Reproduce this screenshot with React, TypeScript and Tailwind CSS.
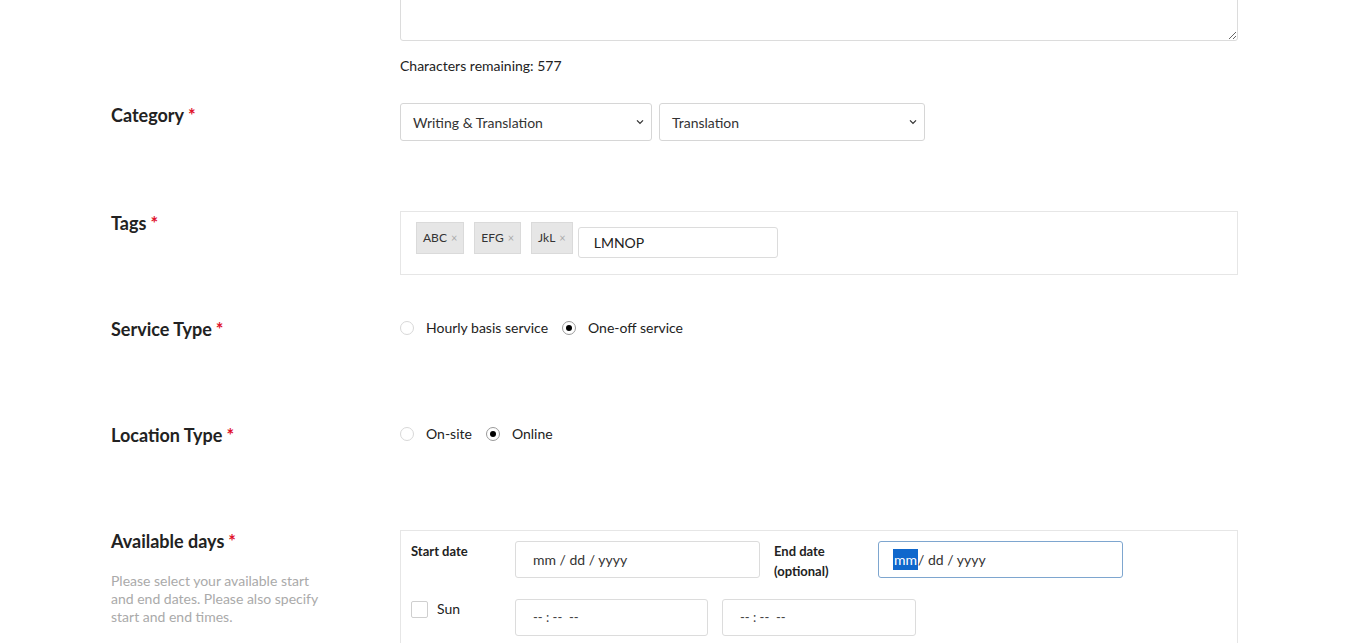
import React from 'react'

const font = { fontFamily: 'Lato, "Noto Sans", Arial, sans-serif' }

function Label({ text }: { text: string }) {
    return (
        <div className="text-[18px] font-bold leading-[24px] text-[#222]">
            {text}
            <span className="ml-1 text-[#e0112b]">*</span>
        </div>
    )
}

function Chevron() {
    return (
        <svg width="8" height="6" viewBox="0 0 8 6" className="shrink-0">
            <path d="M1 1.4 L4 4.4 L7 1.4" fill="none" stroke="#333" strokeWidth="1.3" />
        </svg>
    )
}

function Select({ value, width }: { value: string; width: string }) {
    return (
        <div className={`${width} flex h-[38px] items-center justify-between rounded-[3px] border border-[#d6d6d6] bg-white pl-3 pr-[7px] text-[14px] text-[#333]`}>
            <span>{value}</span>
            <Chevron />
        </div>
    )
}

function Chip({ text }: { text: string }) {
    return (
        <div className="flex h-[32px] items-center gap-[4px] border border-[#dadada] bg-[#e6e6e6] px-[6px] text-[12px] text-[#333]">
            <span>{text}</span>
            <span className="text-[11px] text-[#aaa]">×</span>
        </div>
    )
}

function Radio({ label, checked }: { label: string; checked?: boolean }) {
    return (
        <div className="mr-[14px] flex items-center gap-3">
            <span
                className={`flex h-[14px] w-[14px] items-center justify-center rounded-full border ${checked ? 'border-[#9a9a9a]' : 'border-[#d8d8d8]'} bg-white`}
            >
                {checked && <span className="h-[6px] w-[6px] rounded-full bg-black" />}
            </span>
            <span className="text-[14px] text-[#222]">{label}</span>
        </div>
    )
}

export default function App() {
    return (
        <div style={font} className="min-h-[643px] overflow-hidden bg-white pl-[111px]">
            {/* Description (scrolled out of view) */}
            <div className="flex">
                <div className="w-[289px] shrink-0" />
                <div className="w-[838px]">
                    <textarea
                        readOnly
                        className="-mt-[60px] block h-[101px] w-full rounded-[3px] border border-[#dcdcdc] bg-white outline-none"
                    />
                    <p className="mt-[15px] text-[14px] leading-[20px] text-[#222]">Characters remaining: 577</p>
                </div>
            </div>

            {/* Category */}
            <div className="mt-[27px] flex min-h-[108px]">
                <div className="w-[289px] shrink-0">
                    <Label text="Category" />
                </div>
                <div className="flex w-[838px] items-start gap-[7px]">
                    <Select value="Writing & Translation" width="w-[252px]" />
                    <Select value="Translation" width="w-[266px]" />
                </div>
            </div>

            {/* Tags */}
            <div className="flex min-h-[106px]">
                <div className="w-[289px] shrink-0">
                    <Label text="Tags" />
                </div>
                <div className="h-[64px] w-[838px] border border-[#e6e6e6] px-[15px] pt-[10px]">
                    <div className="flex items-start">
                        <div className="flex gap-[10px]">
                            <Chip text="ABC" />
                            <Chip text="EFG" />
                            <Chip text="JkL" />
                        </div>
                        <div className="ml-[5px] mt-[5px] flex h-[31px] w-[200px] items-center rounded-[3px] border border-[#dcdcdc] pl-[15px] text-[14px] text-[#222]">
                            LMNOP
                        </div>
                    </div>
                </div>
            </div>

            {/* Service Type */}
            <div className="flex min-h-[106px]">
                <div className="w-[289px] shrink-0">
                    <Label text="Service Type" />
                </div>
                <div className="flex h-[21px] w-[838px] items-center">
                    <Radio label="Hourly basis service" />
                    <Radio label="One-off service" checked />
                </div>
            </div>

            {/* Location Type */}
            <div className="flex min-h-[106px]">
                <div className="w-[289px] shrink-0">
                    <Label text="Location Type" />
                </div>
                <div className="flex h-[21px] w-[838px] items-center">
                    <Radio label="On-site" />
                    <Radio label="Online" checked />
                </div>
            </div>

            {/* Available days */}
            <div className="flex">
                <div className="w-[289px] shrink-0">
                    <Label text="Available days" />
                    <p className="mt-[19px] w-[210px] text-[14px] leading-[18px] text-[#aaa]">
                        Please select your available start and end dates. Please also specify start and end times.
                    </p>
                </div>
                <div className="mt-px h-[140px] w-[838px] border border-[#e6e6e6] p-[10px]">
                    <div className="flex items-start">
                        <div className="w-[104px] text-[13px] font-bold leading-[20px] text-[#222]">Start date</div>
                        <div className="flex h-[37px] w-[245px] items-center rounded-[3px] border border-[#dcdcdc] pl-[17px] text-[14px] text-[#333]">
                            mm / dd / yyyy
                        </div>
                        <div className="ml-[14px] w-[104px] text-[13px] font-bold leading-[20px] text-[#222]">
                            End date
                            <br />
                            (optional)
                        </div>
                        <div className="flex h-[37px] w-[245px] items-center rounded-[3px] border border-[#7ea6cf] pl-[14px] text-[14px] text-[#333]">
                            <span className="bg-[#0f67cc] px-[1px] text-white">mm</span>
                            <span>/ dd / yyyy</span>
                        </div>
                    </div>
                    <div className="mt-[18px] flex items-start">
                        <div className="flex w-[104px] items-center gap-[9px]">
                            <span className="mt-px h-[17px] w-[17px] rounded-[2px] border border-[#cfcfcf] bg-white" />
                            <span className="text-[14px] leading-[20px] text-[#222]">Sun</span>
                        </div>
                        <div className="flex h-[37px] w-[193px] items-center rounded-[3px] border border-[#dcdcdc] pl-[17px] text-[13px] text-[#444]">
                            -- : --&nbsp;&nbsp;--
                        </div>
                        <div className="ml-[14px] flex h-[37px] w-[194px] items-center rounded-[3px] border border-[#dcdcdc] pl-[17px] text-[13px] text-[#444]">
                            -- : --&nbsp;&nbsp;--
                        </div>
                    </div>
                </div>
            </div>
        </div>
    )
}
